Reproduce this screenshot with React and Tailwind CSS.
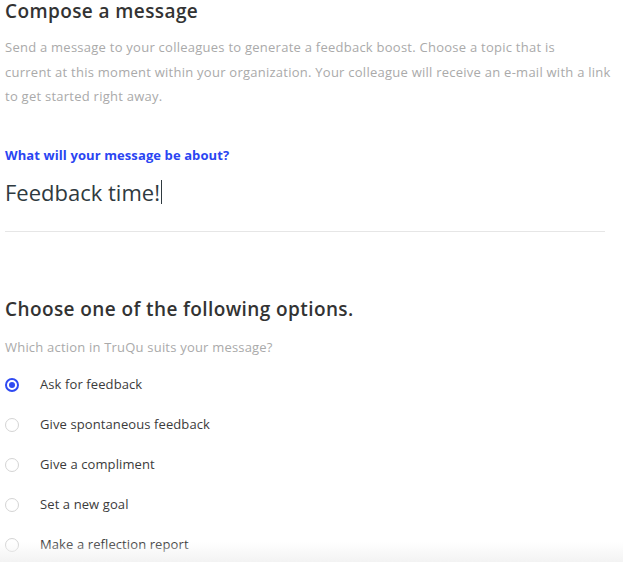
import { useState } from "react";

const OPTIONS = [
  "Ask for feedback",
  "Give spontaneous feedback",
  "Give a compliment",
  "Set a new goal",
  "Make a reflection report",
];

function Radio({ checked }) {
  if (checked) {
    return (
      <span className="flex h-[14px] w-[14px] shrink-0 items-center justify-center rounded-full border-2 border-[#2f4af2]">
        <span className="h-[6px] w-[6px] rounded-full bg-[#2f4af2]" />
      </span>
    );
  }
  return <span className="block h-[14px] w-[14px] shrink-0 rounded-full border border-[#d4d4d4]" />;
}

export default function App() {
  const [selected, setSelected] = useState(0);

  return (
    <div className="relative h-[562px] overflow-hidden bg-white px-[5px] font-['Open_Sans','Liberation_Sans',sans-serif]">
      <h1 className="text-[19px] font-semibold leading-[22px] tracking-[0.4px] text-[#333]">
        Compose a message
      </h1>
      <p className="mt-[13px] text-[13px] leading-[24.5px] tracking-[0.25px] text-[#aaa]">
        Send a message to your colleagues to generate a feedback boost. Choose a topic that is
        <br />
        current at this moment within your organization. Your colleague will receive an e-mail with a link
        <br />
        to get started right away.
      </p>

      <div className="mt-[37px] text-[13px] font-bold leading-[18px] tracking-[0.1px] text-[#2a45f2]">
        What will your message be about?
      </div>
      <div className="mt-[13px] w-[600px] border-b border-[#e6e6e6] pb-[24px]">
        <div className="flex h-[30px] items-center text-[22px] leading-[30px] text-[#2f3a40]">
          Feedback time!
          <span className="ml-[1px] h-[24px] w-[1px] bg-[#2f3a40]" />
        </div>
      </div>

      <h2 className="mt-[65px] text-[19px] font-semibold leading-[24px] tracking-[0.4px] text-[#333]">
        Choose one of the following options.
      </h2>
      <p className="mt-[17px] text-[13px] leading-[18px] tracking-[0.2px] text-[#aaa]">
        Which action in TruQu suits your message?
      </p>

      <ul className="mt-[9px] flex flex-col">
        {OPTIONS.map((opt, i) => (
          <li key={opt}>
            <button
              type="button"
              onClick={() => setSelected(i)}
              className="flex h-[40px] items-center gap-[21px] text-[13px] tracking-[0.1px] text-[#3b3b3b]"
            >
              <Radio checked={selected === i} />
              {opt}
            </button>
          </li>
        ))}
      </ul>

      <div className="pointer-events-none absolute bottom-0 left-0 right-0 h-[20px] bg-gradient-to-b from-white/0 to-[#f3f3f3]" />
    </div>
  );
}
